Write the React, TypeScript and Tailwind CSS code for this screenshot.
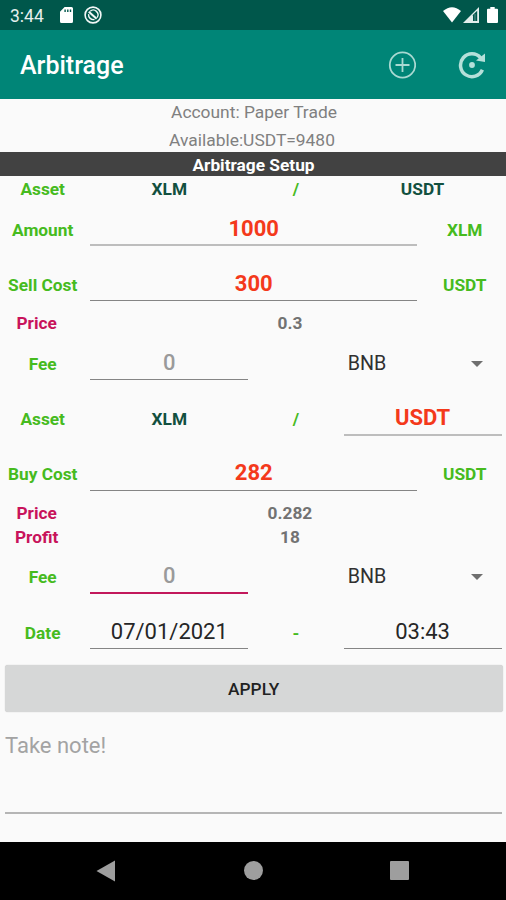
import React from "react";

type FieldProps = {
  value: string;
  tone?: "bold" | "hint" | "plain";
  line?: string;
};

const tones = {
  bold: "font-bold text-[#f4391b]",
  hint: "font-medium text-[#9a9a9a]",
  plain: "text-[#262626]",
};

function Field({ value, tone = "bold", line = "border-b border-[#858585]" }: FieldProps) {
  return (
    <div className={`mx-[5.5px] h-[30.5px] text-center text-[22px] leading-[26px] ${tones[tone]} ${line}`}>
      {value}
    </div>
  );
}

function Label({ children }: { children: React.ReactNode }) {
  return <div className="text-center font-bold text-[#46bb1e]">{children}</div>;
}

function CostRow({ label, value, unit, line }: { label: string; value: string; unit: string; line?: string }) {
  return (
    <div className="grid h-[55.2px] grid-cols-[1fr_4fr_1fr] items-baseline pt-[14.5px]">
      <Label>{label}</Label>
      <Field value={value} line={line} />
      <Label>{unit}</Label>
    </div>
  );
}

function InfoRow({ label, value }: { label: string; value: string }) {
  return (
    <div className="grid h-6 grid-cols-[1fr_6fr] text-center font-bold leading-6">
      <div className="text-[#c8135b]">{label}</div>
      <div className="text-[#727272]">{value}</div>
    </div>
  );
}

function FeeRow({ line }: { line?: string }) {
  return (
    <div className="grid h-[55.2px] grid-cols-[1fr_2fr_1fr_2fr] items-baseline pt-[14.5px]">
      <Label>Fee</Label>
      <Field value="0" tone="hint" line={line} />
      <div />
      <div className="flex items-center justify-between pr-[24px] pl-[9.5px]">
        <span className="text-[19.7px] leading-6 text-[#303030]">BNB</span>
        <svg width="12" height="6" viewBox="0 0 12 6" fill="#6f6f6f">
          <path d="M0 0h12L6 6z" />
        </svg>
      </div>
    </div>
  );
}

function StatusBar() {
  return (
    <div className="flex h-[30px] items-center bg-[#00574b] pr-2 pl-[10px] text-white">
      <span className="w-[50px] pt-px text-[17.5px] leading-5 text-[#e6efed]">3:44</span>
      <svg width="13" height="16" viewBox="0 0 13 16" fill="#fff">
        <path
          fillRule="evenodd"
          d="M4.6 0H11.5Q13 0 13 1.5V14.5Q13 16 11.5 16H1.5Q0 16 0 14.5V4.8ZM4.4 2.5V5H5.8V2.5ZM7.1 2.5V5H8.5V2.5ZM9.8 2.5V5H11.2V2.5Z"
        />
      </svg>
      <svg className="ml-[11px]" width="18" height="18" viewBox="0 0 18 18" fill="none" stroke="#f2f8f7">
        <circle cx="9" cy="9" r="7.9" strokeWidth="1.6" />
        <path d="M4.6 8.2A4.7 4.7 0 0 0 10.5 13.4" strokeWidth="1.4" />
        <path d="M6.2 5.2A4.7 4.7 0 0 1 13 11.6" strokeWidth="1.4" />
        <path d="M4.8 5.8L12.6 12.8" strokeWidth="2" />
      </svg>
      <svg className="ml-auto" width="18" height="16" viewBox="0 0 18 16" fill="#fff">
        <path d="M0 4Q9-3.6 18 4L9 15.5Z" />
      </svg>
      <svg className="ml-[2px]" width="16" height="16" viewBox="0 0 16 16">
        <path d="M0 16L16 0V16Z" fill="#e3eeec" />
        <path d="M9 8.8L14.2 3.7V14H9Z" fill="#00574b" />
        <path d="M9.5 8.3V14" stroke="#e3eeec" strokeWidth="1" />
        <path d="M12 7V14" stroke="#5d918a" strokeWidth="1" />
      </svg>
      <svg className="ml-2" width="11" height="16" viewBox="0 0 11 16" fill="#fff">
        <path d="M3.3 0H7.7V1.7H10Q11 1.7 11 2.7V15Q11 16 10 16H1Q0 16 0 15V2.7Q0 1.7 1 1.7H3.3Z" />
      </svg>
    </div>
  );
}

function AppBar() {
  return (
    <div className="flex h-[68.5px] items-center bg-[#008577] pr-[19px] pl-5">
      <h1 className="mt-[3px] text-[25px] leading-8 font-medium text-white">Arbitrage</h1>
      <svg className="mt-px ml-auto" width="28" height="28" viewBox="0 0 28 28" fill="none" stroke="#a9d9d2">
        <circle cx="14.5" cy="14" r="12.7" strokeWidth="1.8" />
        <path d="M14.5 7V21M7.5 14H21.5" strokeWidth="1.8" />
      </svg>
      <svg className="mt-px ml-[41px]" width="30" height="28" viewBox="0 0 30 28" fill="none" stroke="#b4e0da">
        <path d="M23.6 6.8A11.4 11.4 0 1 0 25.4 18.7" strokeWidth="3.5" />
        <path d="M28 2.5V11L19 9.5Z" fill="#b4e0da" stroke="none" />
        <circle cx="15" cy="14" r="2.9" fill="#b4e0da" stroke="none" />
      </svg>
    </div>
  );
}

function NavBar() {
  return (
    <div className="flex h-[58.5px] items-center bg-black">
      <svg className="ml-[96px]" width="20" height="22" viewBox="0 0 20 22" fill="#9e9e9e">
        <path d="M0.5 11L19 0.5V21.5Z" />
      </svg>
      <div className="ml-[128px] size-[19px] rounded-full bg-[#9e9e9e]" />
      <div className="ml-[126.5px] size-[19px] rounded-[1px] bg-[#9e9e9e]" />
    </div>
  );
}

export default function App() {
  return (
    <div className="flex h-[900px] w-[506px] flex-col bg-[#fafafa] font-['Roboto',sans-serif] text-[17.3px] leading-6">
      <StatusBar />
      <AppBar />
      <div className="flex h-[53.5px] flex-col items-center pt-[1px] text-[17.4px] text-[#808080]">
        <div className="h-[29px] pl-[2px]">Account: Paper Trade</div>
        <div className="pr-[2px]">Available:USDT=9480</div>
      </div>
      <div className="h-[23.5px] bg-[#424242] pl-px text-center leading-[26px] font-bold text-white">Arbitrage Setup</div>
      <div className="-mr-px flex flex-col pl-[0.5px]">
        <div className="grid h-[25.5px] grid-cols-[1fr_2fr_1fr_2fr] text-center font-bold leading-[26px]">
          <Label>Asset</Label>
          <div className="text-[#12503f]">XLM</div>
          <Label>/</Label>
          <div className="text-[#12503f]">USDT</div>
        </div>
        <CostRow label="Amount" value="1000" unit="XLM" line="border-b-2 border-[#bdbdbd]" />
        <CostRow label="Sell Cost" value="300" unit="USDT" />
        <InfoRow label="Price" value="0.3" />
        <FeeRow />
        <div className="grid h-[55.2px] grid-cols-[1fr_2fr_1fr_2fr] items-baseline pt-[14.5px]">
          <Label>Asset</Label>
          <div className="text-center font-bold text-[#12503f]">XLM</div>
          <Label>/</Label>
          <Field value="USDT" line="border-b-2 border-[#bdbdbd]" />
        </div>
        <CostRow label="Buy Cost" value="282" unit="USDT" />
        <InfoRow label="Price" value="0.282" />
        <InfoRow label="Profit" value="18" />
        <FeeRow line="border-b-2 border-[#c2185b]" />
        <div className="grid h-[55.2px] grid-cols-[1fr_2fr_1fr_2fr] items-baseline pt-[14.5px]">
          <Label>Date</Label>
          <Field value="07/01/2021" tone="plain" />
          <Label>-</Label>
          <Field value="03:43" tone="plain" />
        </div>
      </div>
      <button className="mr-[3px] ml-[4.5px] mt-[6px] h-[47px] rounded-[3px] bg-[#d6d7d7] font-medium text-[#222] shadow-[0_0_1px_#bbb]">
        APPLY
      </button>
      <div className="mr-1 ml-[5px] mt-[20px] h-[82px] border-b-2 border-[#b5b5b5] pt-px text-[22px] leading-[26px] text-[#a3a3a3]">
        Take note!
      </div>
      <div className="mt-auto">
        <NavBar />
      </div>
    </div>
  );
}
